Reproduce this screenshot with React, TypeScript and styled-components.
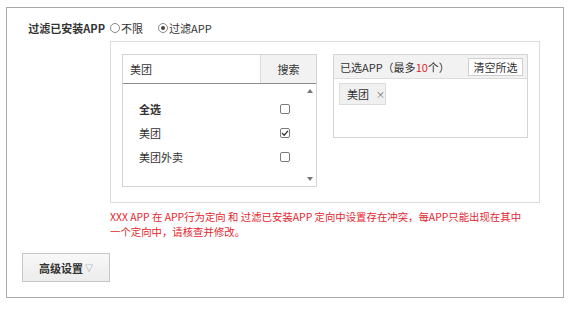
import React from 'react'
import styled, { createGlobalStyle } from 'styled-components'

const GlobalStyle = createGlobalStyle`
  body {
    margin: 0;
    background: #fff;
    font-family: "Noto Sans CJK SC", "Noto Sans", sans-serif;
    font-size: 11px;
    color: #333;
  }
  * { box-sizing: border-box; }
`

const Frame = styled.div`
  margin: 7px 0 0 6px;
  width: 558px;
  border: 1px solid #a9a9a9;
  padding: 10px 0 15px 0;
`

const FormRow = styled.div`
  display: grid;
  grid-template-columns: 103px 1fr;
`

const Label = styled.div`
  height: 20px;
  line-height: 20px;
  text-align: right;
  padding-right: 5px;
  font-weight: bold;
  color: #333;
  white-space: nowrap;
`

const Content = styled.div`
  display: flex;
  flex-direction: column;
`

const RadioGroup = styled.div`
  display: flex;
  align-items: center;
  height: 20px;
  gap: 15px;
`

const RadioItem = styled.label`
  display: flex;
  align-items: center;
  gap: 1px;
  color: #333;
`

const RadioDot = styled.span<{ $on?: boolean }>`
  width: 10px;
  height: 10px;
  border-radius: 50%;
  border: 1px solid #8a8a8a;
  display: inline-flex;
  align-items: center;
  justify-content: center;
  &::after {
    content: '';
    width: 4px;
    height: 4px;
    border-radius: 50%;
    background: ${({ $on }) => ($on ? '#444' : 'transparent')};
  }
`

const Panel = styled.div`
  margin-top: 3px;
  width: 430px;
  height: 162px;
  border: 1px solid #dcdcdc;
  padding: 12px 11px 15px 11px;
  display: flex;
  gap: 16px;
  align-items: flex-start;
`

const SearchBox = styled.div`
  width: 195px;
  height: 133px;
  border: 1px solid #d4d4d4;
  display: flex;
  flex-direction: column;
`

const SearchHead = styled.div`
  height: 29px;
  display: flex;
  border-bottom: 1px solid #8c8c8c;
`

const SearchInput = styled.div`
  flex: 1;
  padding-left: 7px;
  line-height: 28px;
  background: #fff;
`

const SearchButton = styled.div`
  width: 56px;
  background: #f2f2f2;
  border-left: 1px solid #dcdcdc;
  text-align: center;
  line-height: 28px;
`

const ListArea = styled.div`
  flex: 1;
  display: flex;
`

const Items = styled.div`
  flex: 1;
  padding-top: 13px;
`

const Item = styled.div<{ $bold?: boolean }>`
  height: 24px;
  display: flex;
  align-items: center;
  justify-content: space-between;
  padding: 0 13px 0 16px;
  font-weight: ${({ $bold }) => ($bold ? 'bold' : 'normal')};
`

const Check = styled.span`
  width: 10px;
  height: 10px;
  border: 1px solid #7a7a7a;
  border-radius: 2px;
  display: inline-flex;
  align-items: center;
  justify-content: center;
`

const ScrollBar = styled.div`
  width: 13px;
  display: flex;
  flex-direction: column;
  justify-content: space-between;
  align-items: center;
  padding: 5px 0 5px;
`

const SelectedBox = styled.div`
  width: 195px;
  height: 84px;
  border: 1px solid #d4d4d4;
`

const SelectedHead = styled.div`
  height: 24px;
  background: #f2f2f2;
  border-bottom: 1px solid #dcdcdc;
  display: flex;
  align-items: center;
  justify-content: space-between;
  padding: 0 4px 0 6px;
`

const Red = styled.span`
  color: #e3262f;
`

const PlainButton = styled.div`
  width: 55px;
  height: 18px;
  line-height: 16px;
  border: 1px solid #cfcfcf;
  background: #fff;
  text-align: center;
`

const Tags = styled.div`
  padding: 4px 5px;
  display: flex;
`

const Tag = styled.span`
  height: 22px;
  width: 47px;
  display: inline-flex;
  align-items: center;
  padding-left: 7px;
  gap: 7px;
  background: #f0f0f0;
  border: 1px solid #dcdcdc;
`

const Close = styled.span`
  font-size: 9px;
  color: #666;
`

const ErrorText = styled.div`
  margin-top: 6px;
  color: #e3262f;
  font-size: 10.4px;
  line-height: 15px;
  white-space: nowrap;
`

const AdvancedButton = styled.div`
  margin: 14px 0 0 15px;
  width: 88px;
  height: 29px;
  border: 1px solid #c6c6c6;
  background: linear-gradient(#f8f8f8, #ececec);
  display: flex;
  align-items: center;
  justify-content: center;
  gap: 2px;
  font-weight: bold;
  color: #333;
`

const Caret = styled.span`
  font-size: 8px;
  font-weight: normal;
  color: #888;
`

const Arrow = ({ up }: { up?: boolean }) => (
  <svg width="6" height="4" viewBox="0 0 6 4">
    <path d={up ? 'M0 4 L3 0 L6 4 Z' : 'M0 0 L3 4 L6 0 Z'} fill="#777" />
  </svg>
)

const Tick = () => (
  <svg width="8" height="8" viewBox="0 0 8 8">
    <path d="M1 4 L3.2 6.2 L7 1.8" stroke="#333" strokeWidth="1.3" fill="none" />
  </svg>
)

export default function App() {
  const apps = [
    { name: '全选', bold: true, on: false },
    { name: '美团', bold: false, on: true },
    { name: '美团外卖', bold: false, on: false },
  ]
  return (
    <>
      <GlobalStyle />
      <Frame>
        <FormRow>
          <Label>过滤已安装APP</Label>
          <Content>
            <RadioGroup>
              <RadioItem><RadioDot />不限</RadioItem>
              <RadioItem><RadioDot $on />过滤APP</RadioItem>
            </RadioGroup>
            <Panel>
              <SearchBox>
                <SearchHead>
                  <SearchInput>美团</SearchInput>
                  <SearchButton>搜索</SearchButton>
                </SearchHead>
                <ListArea>
                  <Items>
                    {apps.map(a => (
                      <Item key={a.name} $bold={a.bold}>
                        {a.name}
                        <Check>{a.on && <Tick />}</Check>
                      </Item>
                    ))}
                  </Items>
                  <ScrollBar>
                    <Arrow up />
                    <Arrow />
                  </ScrollBar>
                </ListArea>
              </SearchBox>
              <SelectedBox>
                <SelectedHead>
                  <span>已选APP（最多<Red>10</Red>个）</span>
                  <PlainButton>清空所选</PlainButton>
                </SelectedHead>
                <Tags>
                  <Tag>美团<Close>×</Close></Tag>
                </Tags>
              </SelectedBox>
            </Panel>
            <ErrorText>
              XXX APP 在 APP行为定向 和 过滤已安装APP 定向中设置存在冲突，每APP只能出现在其中
              <br />
              一个定向中，请核查并修改。
            </ErrorText>
          </Content>
        </FormRow>
        <AdvancedButton>高级设置<Caret>▽</Caret></AdvancedButton>
      </Frame>
    </>
  )
}
